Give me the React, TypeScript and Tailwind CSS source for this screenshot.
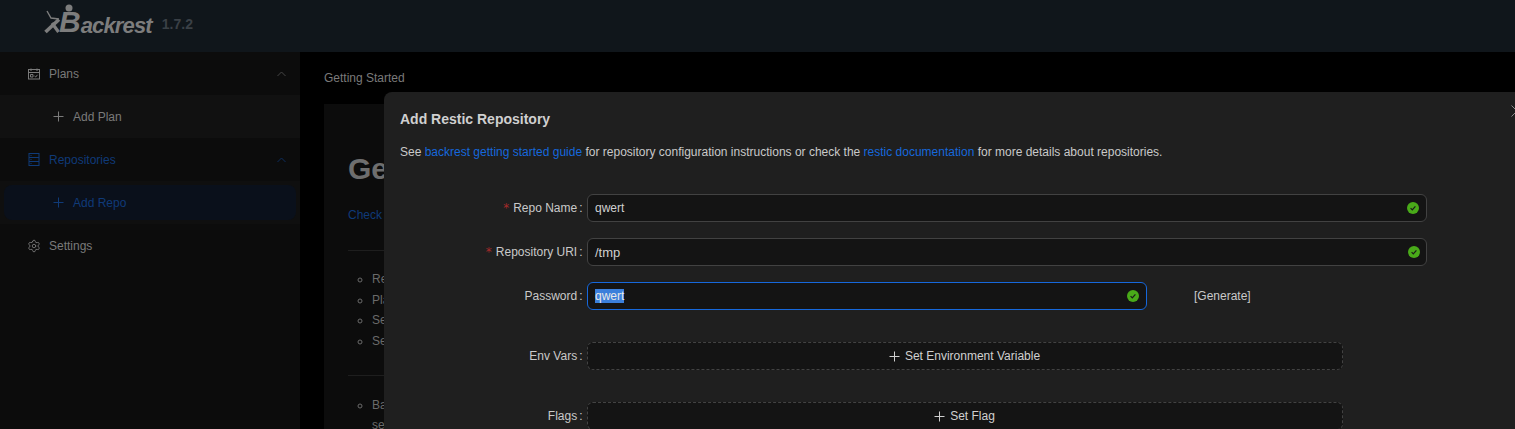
import React from "react";
import { Settings } from "lucide-react";

const font = "font-['Liberation_Sans',Arial,sans-serif]";

const Logo = () => (
  <div className="flex items-end h-[38px] ml-[44px] mt-[3px] relative">
    <svg width="24" height="38" viewBox="0 0 24 38" className="shrink-0">
      <path d="M3 8 L7 15 L15 16" stroke="#7d7d7d" strokeWidth="1.4" fill="none" />
      <path d="M1.5 29 L15 16.5" stroke="#7d7d7d" strokeWidth="3.6" fill="none" />
      <path d="M8 20 L14.5 29" stroke="#7d7d7d" strokeWidth="3.2" fill="none" />
    </svg>
    <svg width="8" height="8" viewBox="0 0 8 8" className="absolute left-[21px] top-[1px]">
      <circle cx="4" cy="4" r="3.5" fill="#7d7d7d" />
    </svg>
    <span className="text-[#7d7d7d] font-bold italic text-[30px] leading-[34px] ml-[-9px] mb-[2px]">B</span>
    <span className="text-[#7d7d7d] font-bold italic text-[22px] leading-[26px] tracking-[-0.85px] mb-[2px]">ackrest</span>
  </div>
);

const PlusIcon = () => (
  <svg width="11" height="11" viewBox="0 0 11 11" fill="none" stroke="currentColor" strokeWidth="1" className="shrink-0">
    <path d="M5.5 0.5V10.5M0.5 5.5H10.5" />
  </svg>
);

const Chevron = ({ className }: { className: string }) => (
  <svg width="9" height="6" viewBox="0 0 9 6" fill="none" stroke="currentColor" strokeWidth="1" className={className}>
    <path d="M0.5 5L4.5 1L8.5 5" />
  </svg>
);

const PlansIcon = () => (
  <svg width="12" height="12" viewBox="0 0 12 12" fill="none" stroke="currentColor" strokeWidth="1">
    <rect x="0.5" y="1.5" width="11" height="9.5" />
    <path d="M3 0.5V3M9 0.5V3M1 4.5H11M2.5 6.5H5V9H2.5ZM6.5 8L7.7 9L9.5 6.8" />
  </svg>
);

const RepoIcon = () => (
  <svg width="12" height="13" viewBox="0 0 12 13" fill="none" stroke="currentColor" strokeWidth="1">
    <rect x="1" y="0.5" width="10" height="12" />
    <path d="M1 4.5H11M1 8.5H11M2.5 2.5H3.5M2.5 6.5H3.5M2.5 10.5H3.5" />
  </svg>
);

const Check = () => (
  <svg width="12" height="12" viewBox="0 0 12 12" className="shrink-0">
    <circle cx="6" cy="6" r="6" fill="#49aa19" />
    <path d="M3.6 6.2L5.3 7.9L8.4 4.4" stroke="#1a1a1a" strokeWidth="1.2" fill="none" />
  </svg>
);

type RowProps = { label: string; required?: boolean; children: React.ReactNode; className?: string };

const FormRow = ({ label, required, children, className }: RowProps) => (
  <div className={`flex items-center h-[28px] ${className ?? ""}`}>
    <label className="w-[187px] shrink-0 pr-[4.5px] flex justify-end items-center text-[12px] text-[#c9c9c9]">
      {required && <span className="text-[#a52a2a] mr-[4px] text-[12px] font-['DejaVu_Sans',sans-serif]">*</span>}
      <span>{label}</span>
      <span className="ml-[2px]">:</span>
    </label>
    {children}
  </div>
);

const TextBox = ({ value, big }: { value: string; big?: boolean }) => (
  <div className={`w-[840px] h-[28px] rounded-[6px] border border-[#424242] bg-[#141414] flex items-center justify-between pl-[7px] ${big ? "pr-[6px] text-[13px]" : "pr-[7px] text-[12px]"} text-[#d0d0d0]`}>
    <span className={big ? "pt-[1px]" : ""}>{value}</span>
    <Check />
  </div>
);

const DashedButton = ({ label }: { label: string }) => (
  <button className="w-[756px] h-[28px] pr-[1px] rounded-[6px] border border-dashed border-[#424242] bg-[#141414] flex items-center justify-center gap-[5px] text-[12px] text-[#d0d0d0]">
    <PlusIcon />
    {label}
  </button>
);

const MenuRow = ({ icon, label, active }: { icon: React.ReactNode; label: string; active?: boolean }) => (
  <div className={`h-[43px] flex items-center pl-[28px] pr-[14px] text-[12px] ${active ? "text-[#0f3a78]" : "text-[#7a7a7a]"}`}>
    <span className="w-[12px] mr-[9px] flex justify-center">{icon}</span>
    <span className="flex-1">{label}</span>
    <Chevron className={active ? "text-[#0c2c5c]" : "text-[#444444]"} />
  </div>
);

const SubRow = ({ label, active }: { label: string; active?: boolean }) => (
  <div className={`h-[43px] flex items-center ${active ? "bg-[#0f0f0f]" : "bg-[#111111]"}`}>
    <div className={`h-[35px] w-[292px] mx-[4px] pl-[48px] flex items-center gap-[9px] rounded-[8px] text-[12px] ${active ? "bg-[#0a101b] text-[#0f3a78]" : "text-[#7a7a7a]"}`}>
      <span className="ml-[1px] flex"><PlusIcon /></span>
      {label}
    </div>
  </div>
);

export default function App() {
  return (
    <div className={`${font} relative h-screen w-full overflow-hidden bg-black flex flex-col`}>
      <header className="h-[52px] shrink-0 bg-[#10161b] flex items-start">
        <Logo />
        <span className="ml-[10px] mt-[16px] text-[14px] font-bold leading-[16px] text-[#3a4046]">1.7.2</span>
      </header>

      <div className="flex flex-1 min-h-0">
        <aside className="w-[300px] shrink-0 bg-[#0c0c0c]">
          <MenuRow icon={<PlansIcon />} label="Plans" />
          <SubRow label="Add Plan" />
          <MenuRow icon={<RepoIcon />} label="Repositories" active />
          <SubRow label="Add Repo" active />
          <div className="h-[43px] flex items-center pl-[27px] text-[12px] text-[#7a7a7a]">
            <Settings size={14} strokeWidth={1.5} className="mr-[8px]" />
            Settings
          </div>
        </aside>

        <main className="flex-1 pl-[24px] pt-[18px]">
          <div className="text-[12px] leading-[16px] text-[#7a7a7a]">Getting Started</div>
          <section className="mt-[18px] bg-[#0c0c0c] pl-[24px] pt-[46px] h-[400px]">
            <h1 className="text-[30px] leading-[38px] font-bold text-[#6e6e6e]">Getting Started</h1>
            <p className="mt-[19px] text-[12px] leading-[16px] text-[#0f3a78]">Check</p>
            <hr className="mt-[27px] border-[#1e1e1e]" />
            <ul className="mt-[18px] list-[circle] pl-[24px] text-[12px] leading-[20.7px] text-[#6a6a6a]">
              <li>Repos</li>
              <li>Plans</li>
              <li>Settings</li>
              <li>Settings</li>
            </ul>
            <hr className="mt-[23px] border-[#1e1e1e]" />
            <ul className="mt-[19px] list-[circle] pl-[24px] text-[12px] leading-[20px] text-[#6a6a6a]">
              <li>Backrest<br />settings</li>
            </ul>
          </section>
        </main>
      </div>

      <div className="absolute left-[384px] top-[92px] w-[1200px] h-[400px] rounded-[8px] bg-[#1f1f1f] pl-[16px] pt-[18px]">
        <svg width="12" height="12" viewBox="0 0 12 12" fill="none" stroke="#8a8a8a" strokeWidth="1" className="absolute left-[1127px] top-[13px]">
          <path d="M0.5 0.5L11.5 11.5M11.5 0.5L0.5 11.5" />
        </svg>
        <h2 className="text-[14px] leading-[18px] font-bold text-[#d0d0d0]">Add Restic Repository</h2>
        <p className="mt-[16px] text-[12px] leading-[16px] text-[#c9c9c9]">
          See <a className="text-[#1668dc]">backrest getting started guide</a> for repository configuration instructions or check the <a className="text-[#1668dc]">restic documentation</a> for more details about repositories.
        </p>
        <FormRow label="Repo Name" required className="mt-[34px]">
          <TextBox value="qwert" />
        </FormRow>
        <FormRow label="Repository URI" required className="mt-[16px]">
          <TextBox value="/tmp" big />
        </FormRow>
        <FormRow label="Password" className="mt-[16px]">
          <div className="w-[560px] h-[28px] rounded-[6px] border border-[#1668dc] bg-[#141414] flex items-center justify-between px-[7px] text-[12px] text-[#d0d0d0]">
            <span className="bg-[#3b7fdb] text-[#e8e8e8] leading-[14px]">qwert</span>
            <Check />
          </div>
          <span className="ml-[47px] text-[12px] text-[#c9c9c9]">[Generate]</span>
        </FormRow>
        <FormRow label="Env Vars" className="mt-[32px]">
          <DashedButton label="Set Environment Variable" />
        </FormRow>
        <FormRow label="Flags" className="mt-[32px]">
          <DashedButton label="Set Flag" />
        </FormRow>
      </div>
    </div>
  );
}
